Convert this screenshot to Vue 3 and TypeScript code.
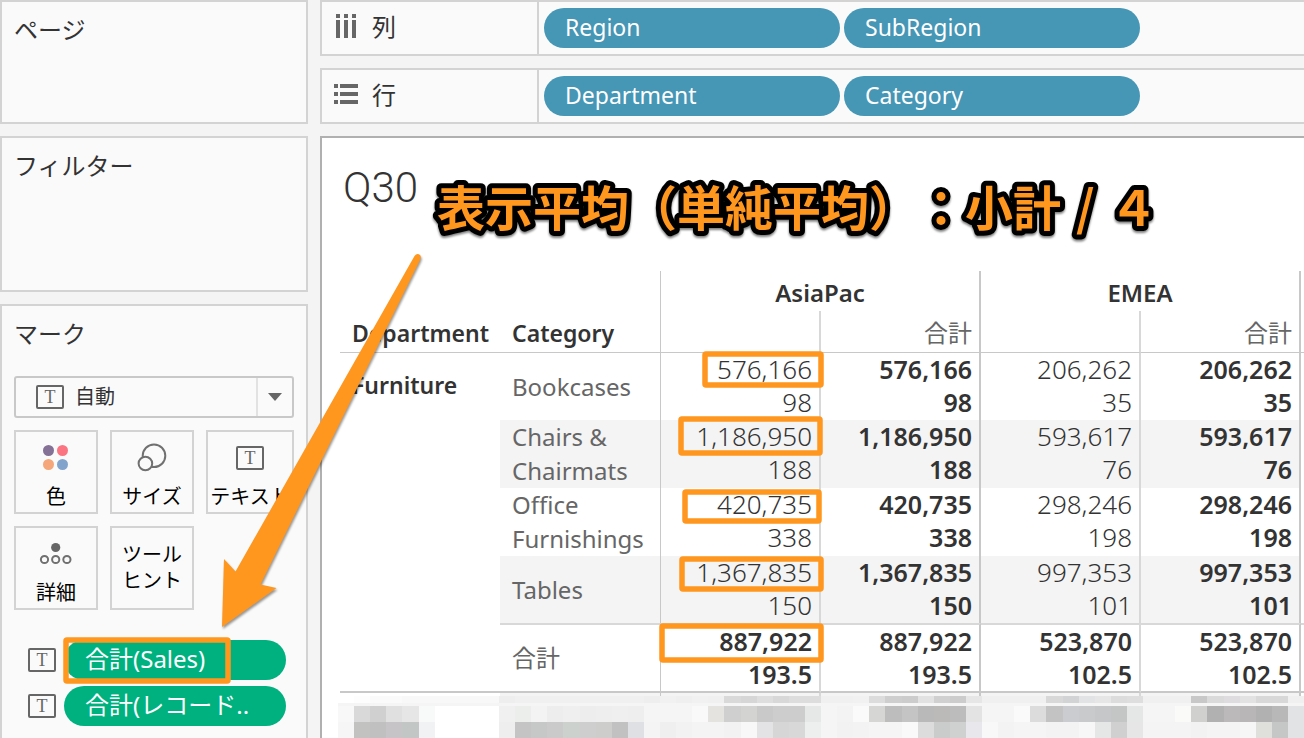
<script setup lang="ts">
interface Row {
  category: string
  band?: boolean
  total?: boolean
  values: [string, string][]
}

interface Shelf {
  id: string
  label: string
  pills: string[]
}

const shelves: Shelf[] = [
  { id: 'columns', label: '列', pills: ['Region', 'SubRegion'] },
  { id: 'rows', label: '行', pills: ['Department', 'Category'] },
]

const measures: string[] = ['合計(Sales)', '合計(レコード..']

const rows: Row[] = [
  { category: 'Bookcases', values: [['576,166', '98'], ['576,166', '98'], ['206,262', '35'], ['206,262', '35']] },
  { category: 'Chairs & Chairmats', band: true, values: [['1,186,950', '188'], ['1,186,950', '188'], ['593,617', '76'], ['593,617', '76']] },
  { category: 'Office Furnishings', values: [['420,735', '338'], ['420,735', '338'], ['298,246', '198'], ['298,246', '198']] },
  { category: 'Tables', band: true, values: [['1,367,835', '150'], ['1,367,835', '150'], ['997,353', '101'], ['997,353', '101']] },
  { category: '合計', total: true, values: [['887,922', '193.5'], ['887,922', '193.5'], ['523,870', '102.5'], ['523,870', '102.5']] },
]

// Grey levels of the pixelated strip, sixty blocks in each line.
const mosaicTop =
  'fff fdfdfd fafafa fafafa f8f8f8 f8f8f8 f8f8f8 f8f8f8 f8f8f8 f8f8f8 eeeeee f0f0f0 f0f0f0 f0f0f0 f0f0f0 f0f0f0 f0f0f0 f0f0f0 f0f0f0 eeeeee f1f1f1 efefef f1f1f1 f0f0f0 d9d9d9 d6d6d6 dedede d8d8d8 dddddd dddddd f0f0f0 f0f0f0 f1f1f1 dcdcdc cecece cccccc e2e2e2 d0d0d0 cccccc e6e6e6 f0f0f0 f0f0f0 f0f0f0 f0f0f0 d8d8d8 d2d3d5 e2e3e5 e6e6e6 dcdcdc dedede f0f0f0 f0f0f0 f0f0f0 c8c8c8 dadada dedcde e2e2e2 d8d8d8 d8d8d8 f0f0f0'
const mosaicMiddle =
  'f8f8f8 d9d9d9 d0d0d0 e1e0e1 e6e6e6 f8fafa ffffff ffffff ffffff ffffff f0f0f0 eceeec f3f3f3 ededee efefef ededed eeeeee efefef eeeeee f5f5f5 f5f5f5 f5f5f5 f9f9f9 e4e3e0 cfcfcf d3d3d1 c9c9c9 cdcdcd cdcdcd e6e8e7 f5f5f5 f3f3f3 fafafa d6d6d5 bdbdbd c4c4c4 b9b9b9 bcbab8 bcbcbc e3e3e4 f5f5f5 f5f5f5 fafafa dcdcdc c3c3c4 caccd0 c8cacb c6c7c9 c3c6c5 e5e7e6 f5f5f5 f5f5f5 fafaf8 d0d0ce b1b1b1 bcb9bb b9b6b8 b1b1b1 b8b8b8 e1e3e5'
const mosaicBottom =
  'f6f6f6 c2c2c0 c0c0c0 c6c4c6 c2c6c4 f0f2f4 ffffff ffffff ffffff ffffff eeeeee c4c4c4 c5c8c7 cacaca cdd1ce cecece cdcdcb c1c1c2 dfe0e3 f4f4f4 efefef f2f2f2 f4f4f4 f4f4f4 f2f2f2 f8f8f8 e3e3e5 d6d6d6 d8d8d8 ecefed f5f5f5 f2f2f2 f3f3f3 f5f5f5 f5f5f5 f9f9f9 dcdcdc cacccc cfd0d0 e8e8ec f8f8f8 f3f3f3 f5f5f5 f5f5f5 f3f3f3 f3f3f3 f7f7f7 e5e6e6 d0d0d0 e6e6e7 f4f4f4 f4f4f4 f4f4f4 f2f2f2 f4f4f4 f4f4f4 f6f6f6 dfe0dc c4c7c5 e1e3e5'

const mosaic = [
  { name: 'thin', cells: mosaicTop.split(' ') },
  { name: 'tall', cells: mosaicMiddle.split(' ') },
  { name: 'tall', cells: mosaicBottom.split(' ') },
]
</script>

<template>
  <div class="workbook">
    <aside class="side">
      <section class="panel pages"><h2>ページ</h2></section>
      <section class="panel filters"><h2>フィルター</h2></section>
      <section class="panel marks">
        <h2>マーク</h2>
        <div class="mark-type">
          <svg class="t-icon" viewBox="0 0 28 24" aria-hidden="true">
            <rect x="1" y="1" width="26" height="22" rx="1" />
            <text x="14" y="18">T</text>
          </svg>
          <select aria-label="マーク">
            <option>自動</option>
          </select>
          <span class="drop"><svg viewBox="0 0 14 8" aria-hidden="true"><path d="M0 0H14L7 8Z" /></svg></span>
        </div>
        <div class="cards">
          <button type="button" class="card">
            <svg class="glyph" viewBox="0 0 40 32" aria-hidden="true">
              <circle cx="12.500" cy="8.500" r="5.500" fill="#857096" />
              <circle cx="26.500" cy="8.500" r="5.500" fill="#fb7481" />
              <circle cx="12.500" cy="22.500" r="5.500" fill="#f5a67a" />
              <circle cx="26.500" cy="22.500" r="5.500" fill="#82a4cc" />
            </svg>
            <span>色</span>
          </button>
          <button type="button" class="card">
            <svg class="glyph line" viewBox="0 0 40 32" aria-hidden="true">
              <circle cx="22" cy="13.800" r="11.300" />
              <circle cx="13.400" cy="21.500" r="6.800" />
            </svg>
            <span>サイズ</span>
          </button>
          <button type="button" class="card">
            <svg class="glyph t-card" viewBox="0 0 40 32" aria-hidden="true">
              <rect x="7" y="5" width="26" height="22" rx="1" />
              <text x="20" y="22">T</text>
            </svg>
            <span>テキスト</span>
          </button>
          <button type="button" class="card">
            <svg class="glyph line detail" viewBox="0 0 40 32" aria-hidden="true">
              <circle class="solid" cx="19.700" cy="9.500" r="4.600" />
              <circle cx="8.500" cy="21.500" r="3.600" />
              <circle cx="19.700" cy="21.500" r="3.600" />
              <circle cx="30.900" cy="21.500" r="3.600" />
            </svg>
            <span>詳細</span>
          </button>
          <button type="button" class="card text-only"><span>ツール<br />ヒント</span></button>
        </div>
        <ul class="measures">
          <li v-for="m in measures" :key="m">
            <svg class="t-icon" viewBox="0 0 28 24" aria-hidden="true">
              <rect x="1" y="1" width="26" height="22" rx="1" />
              <text x="14" y="18">T</text>
            </svg>
            <button type="button" class="pill green">{{ m }}</button>
          </li>
        </ul>
      </section>
    </aside>

    <main class="main">
      <section v-for="s in shelves" :key="s.id" class="shelf">
        <div class="shelf-label">
          <svg v-if="s.id === 'columns'" viewBox="0 0 24 24" aria-hidden="true">
            <path d="M2 0h4v4h-4zM10 0h4v4h-4zM18 0h4v4h-4zM2 6h4v18h-4zM10 6h4v18h-4zM18 6h4v18h-4z" />
          </svg>
          <svg v-else viewBox="0 0 24 24" aria-hidden="true">
            <path d="M0 2h4v4h-4zM0 10h4v4h-4zM0 18h4v4h-4zM6 2h18v4h-18zM6 10h18v4h-18zM6 18h18v4h-18z" />
          </svg>
          <span>{{ s.label }}</span>
        </div>
        <div class="shelf-pills">
          <button v-for="p in s.pills" :key="p" type="button" class="pill blue">{{ p }}</button>
        </div>
      </section>

      <section class="sheet">
        <div class="heading">
          <h1>Q30</h1>
          <svg class="callout" width="740" height="96" viewBox="0 0 740 96">
            <text x="7" y="64">表示平均（単純平均）：小計<tspan dx="15">/</tspan><tspan dx="15">４</tspan></text>
          </svg>
        </div>
        <table>
          <colgroup>
            <col class="c-dept" /><col class="c-cat" /><col class="c-num" /><col class="c-num" /><col class="c-num" /><col class="c-num" /><col />
          </colgroup>
          <thead>
            <tr class="regions">
              <td></td>
              <td class="edge"></td>
              <th colspan="2" scope="colgroup" class="strong">AsiaPac</th>
              <th colspan="2" scope="colgroup" class="strong">EMEA</th>
              <td></td>
            </tr>
            <tr class="subs">
              <th scope="col" class="name">Department</th>
              <th scope="col" class="name edge">Category</th>
              <td class="soft"></td>
              <th scope="col" class="sub strong">合計</th>
              <td class="soft"></td>
              <th scope="col" class="sub strong">合計</th>
              <td></td>
            </tr>
          </thead>
          <tbody>
            <tr v-for="(r, i) in rows" :key="r.category" :class="{ band: r.band, total: r.total, first: i === 0 }">
              <th v-if="i === 0" class="dept" scope="rowgroup" :rowspan="rows.length">Furniture</th>
              <th class="cat edge" scope="row">{{ r.category }}</th>
              <td
                v-for="(v, j) in r.values"
                :key="j"
                class="num"
                :class="j % 2 ? 'strong bold' : 'soft'"
              >{{ v[0] }}<br />{{ v[1] }}</td>
              <td class="rest"></td>
            </tr>
            <tr class="stub">
              <td></td>
              <td class="edge tint"></td>
              <td class="soft tint"></td>
              <td class="strong tint"></td>
              <td class="soft tint"></td>
              <td class="strong tint"></td>
              <td></td>
            </tr>
          </tbody>
        </table>
        <div class="mosaic" aria-hidden="true">
          <div v-for="(line, i) in mosaic" :key="i" class="blocks" :class="line.name">
            <i v-for="(c, j) in line.cells" :key="j" :style="{ background: '#' + c }"></i>
          </div>
        </div>
      </section>
    </main>

    <svg class="notes" width="1304" height="738" viewBox="0 0 1304 738" aria-hidden="true">
      <path class="arrow" d="M222 627L224 559L235.500 571.500L414.500 256Q417 252.500 420 255Q421.500 257 420 260L260.500 584.500L276.500 588Z" />
      <g class="boxes">
        <rect x="66" y="640" width="162" height="41" rx="1" />
        <rect x="705" y="354" width="116" height="31" rx="1" />
        <rect x="681" y="419" width="139" height="34" rx="1" />
        <rect x="685" y="492" width="134" height="29" rx="1" />
        <rect x="682" y="559" width="139" height="30" rx="1" />
        <rect x="662" y="626" width="159" height="34" rx="1" />
      </g>
    </svg>
  </div>
</template>

<style>
body {
  margin: 0;
}
</style>

<style scoped>
* {
  box-sizing: border-box;
}

.workbook {
  position: relative;
  display: grid;
  grid-template-columns: 308px minmax(0, 1fr);
  column-gap: 12px;
  height: 100vh;
  overflow: hidden;
  background: #f4f4f4;
  color: #333;
  font-family: "Noto Sans", "Noto Sans CJK JP", sans-serif;
}

h1,
h2,
p,
ul {
  margin: 0;
  padding: 0;
}

button,
select {
  margin: 0;
  padding: 0;
  border: 0;
  font-family: inherit;
}

.side {
  display: grid;
  grid-template-rows: 124px 156px 1fr;
  row-gap: 12px;
  min-height: 0;
}

.panel {
  padding: 9px 12px;
  border: 2px solid #d3d3d3;
  background: #fafafa;
}

.marks {
  min-height: 446px;
  border-bottom: 0;
}

h2 {
  font-size: 24px;
  font-weight: 400;
  line-height: 36px;
  font-family: "Noto Sans CJK JP", sans-serif;
}

.mark-type {
  display: flex;
  align-items: center;
  height: 42px;
  margin-top: 25px;
  padding-left: 20px;
  border: 2px solid #c8c8c8;
  border-radius: 3px;
}

.t-icon {
  flex: none;
  width: 28px;
  height: 24px;
}

.t-icon rect,
.t-card rect {
  fill: none;
  stroke: #666;
  stroke-width: 2;
}

.t-icon text,
.t-card text {
  fill: #666;
  font: 18px "Liberation Serif", serif;
  text-anchor: middle;
}

select {
  flex: 1;
  min-width: 0;
  height: 38px;
  padding: 0 0 2px 11px;
  appearance: none;
  background: transparent;
  color: #333;
  font-size: 20px;
}

.drop {
  display: flex;
  align-items: center;
  justify-content: center;
  width: 36px;
  height: 38px;
  border-left: 2px solid #e2e2e2;
}

.drop svg {
  width: 14px;
  height: 8px;
  fill: #666;
}

.cards {
  display: grid;
  grid-template-columns: 84px 84px 88px;
  gap: 12px;
  margin-top: 12px;
}

.card {
  display: flex;
  flex-direction: column;
  align-items: center;
  height: 84px;
  padding-top: 10px;
  border: 2px solid #d3d3d3;
  background: #fafafa;
  color: #000;
  font-family: "Noto Sans CJK JP", sans-serif;
  font-size: 20px;
  line-height: 26px;
  white-space: nowrap;
}

.glyph {
  flex: none;
  width: 40px;
  height: 32px;
  margin-bottom: 9px;
}

.line circle {
  fill: #fafafa;
  stroke: #707070;
  stroke-width: 2;
}

.detail .solid {
  fill: #666;
  stroke: none;
}

.text-only {
  padding-top: 14px;
  font-family: "Liberation Sans", "Noto Sans CJK JP", sans-serif;
}

.measures {
  display: grid;
  gap: 6px;
  margin-top: 30px;
  padding: 0 8px 0 14px;
  list-style: none;
}

.measures li {
  display: flex;
  align-items: center;
  gap: 8px;
}

.pill {
  height: 40px;
  padding: 0 21px;
  border-radius: 20px;
  color: #fff;
  text-align: left;
  white-space: nowrap;
}

.green {
  flex: 1;
  padding-bottom: 5px;
  background: #00b180;
  font-size: 24px;
}

.blue {
  flex: 0 1 296px;
  padding-bottom: 2px;
  background: #4696b5;
  font-size: 23px;
}

.main {
  display: flex;
  flex-direction: column;
  gap: 12px;
  min-width: 0;
  min-height: 0;
}

.shelf {
  display: flex;
  flex: none;
  height: 56px;
  border: 2px solid #d3d3d3;
  border-right: 0;
  background: #fafafa;
}

.shelf-label {
  display: flex;
  align-items: center;
  gap: 14px;
  width: 217px;
  padding: 0 0 4px 12px;
  border-right: 2px solid #d3d3d3;
  font-family: "Noto Sans CJK JP", sans-serif;
  font-size: 24px;
  line-height: 36px;
}

.shelf-label svg {
  width: 24px;
  height: 24px;
  fill: #666;
}

.shelf-pills {
  display: flex;
  flex: 1;
  align-items: center;
  gap: 4px;
  padding-left: 5px;
}

.sheet {
  flex: 1;
  min-height: 602px;
  padding: 18px 0 0 18px;
  border: 2px solid #b0b0b0;
  border-width: 2px 0 0 2px;
  background: #fff;
}

.heading {
  display: flex;
  gap: 12px;
  height: 115px;
  padding-left: 3px;
}

h1 {
  font: 300 42px/64px Roboto, sans-serif;
}

.callout {
  flex: none;
  margin-top: 6px;
  filter: drop-shadow(0 2px 1px rgba(0, 0, 0, 0.5));
}

.callout text {
  fill: #ff961e;
  stroke: #000;
  stroke-width: 10px;
  stroke-linejoin: round;
  paint-order: stroke fill;
  font: 700 48px "Noto Sans CJK JP", sans-serif;
  text-spacing-trim: space-all;
}

table {
  width: 100%;
  table-layout: fixed;
  border-collapse: separate;
  border-spacing: 0;
}

.c-dept,
.c-num {
  width: 160px;
}

.c-cat {
  width: 161px;
}

th,
td {
  padding: 0;
  font-weight: 400;
}

.edge {
  border-right: 1px solid #c8c8c8;
}

.soft {
  border-right: 2px solid #d8d8d8;
}

.strong {
  border-right: 2px solid #c8c8c8;
}

.regions {
  height: 40px;
}

.regions th {
  padding-top: 4px;
  font-size: 24px;
  font-weight: 600;
  line-height: 34px;
}

.subs {
  height: 42px;
}

.subs > * {
  border-bottom: 1px solid #c8c8c8;
}

.name {
  padding: 3px 0 0 12px;
  font-size: 23px;
  font-weight: 600;
  line-height: 34px;
  text-align: left;
}

.sub {
  padding: 3px 7px 0 0;
  color: #666;
  font-size: 24px;
  line-height: 34px;
  text-align: right;
}

tbody tr {
  height: 68px;
}

tbody .first {
  height: 67px;
}

.dept {
  padding: 15px 0 0 12px;
  border-bottom: 2px solid #c8c8c8;
  font-size: 23px;
  font-weight: 600;
  line-height: 34px;
  text-align: left;
  vertical-align: top;
}

.cat {
  padding-left: 12px;
  color: #666;
  font-size: 24px;
  line-height: 34px;
  text-align: left;
  vertical-align: middle;
}

.num {
  padding-right: 7px;
  font-size: 26px;
  font-weight: 350;
  line-height: 33px;
  text-align: right;
  vertical-align: top;
}

.bold,
.total .num {
  font-size: 25px;
  font-weight: 600;
}

.band .cat,
.band .num {
  background: #f4f4f4;
}

.total > * {
  border-top: 2px solid #d8d8d8;
  border-bottom: 2px solid #c8c8c8;
}

.total {
  height: 70px;
}

.band:nth-child(4) {
  height: 67px;
}

tbody .stub {
  height: 3px;
}

.tint {
  background: #f4f4f4;
}

.mosaic {
  display: grid;
  gap: 0;
  margin-left: -2px;
  background: #f5f5f5;
}

.blocks {
  display: grid;
  grid-template-columns: repeat(60, 1fr);
}

.thin {
  height: 7px;
  margin-bottom: 3px;
}

.tall {
  height: 16px;
}

.notes {
  position: absolute;
  top: 0;
  left: 0;
  pointer-events: none;
}

.arrow {
  fill: #ff961e;
  filter: drop-shadow(1px 2px 1px rgba(0, 0, 0, 0.4));
}

.boxes rect {
  fill: none;
  stroke: #ff961e;
  stroke-width: 5.500;
}
</style>
